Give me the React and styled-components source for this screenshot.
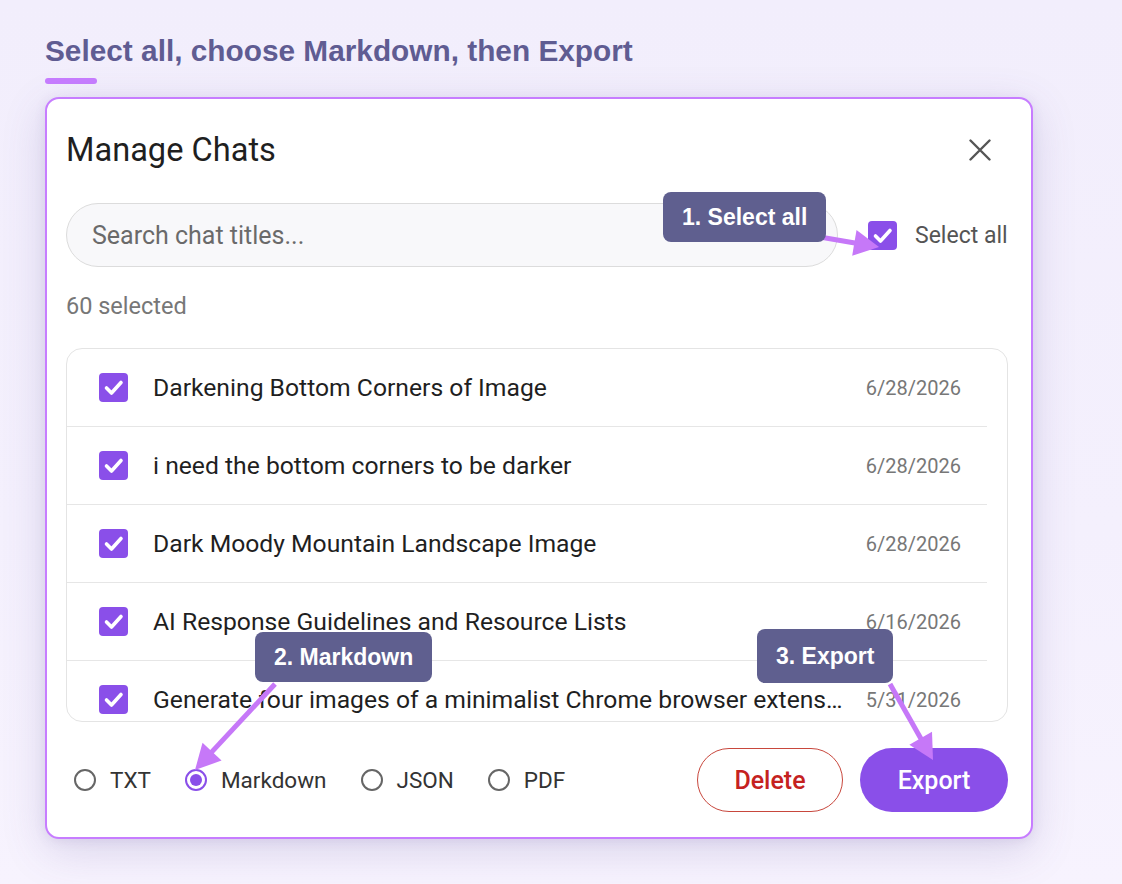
import React from "react";
import styled, { createGlobalStyle } from "styled-components";

const GlobalStyle = createGlobalStyle`
  html, body {
    margin: 0;
    padding: 0;
  }
  body {
    background: linear-gradient(180deg, #f2eefc 0%, #f4f0fd 60%, #f7f3fe 100%);
    font-family: Roboto, "Noto Sans", sans-serif;
    min-height: 100vh;
  }
  * { box-sizing: border-box; }
`;

const Stage = styled.div`
  position: relative;
  width: 1122px;
  height: 884px;
  padding: 33px 0 0 45px;
  overflow: hidden;
`;

const StepTitle = styled.h1`
  margin: 0;
  font-family: "Liberation Sans", Arial, sans-serif;
  font-weight: 700;
  font-size: 29.8px;
  line-height: 36px;
  color: #5f5c92;
`;

const Accent = styled.div`
  margin-top: 9px;
  width: 52px;
  height: 6px;
  border-radius: 3px;
  background: #c77dff;
`;

const Modal = styled.section`
  margin-top: 13px;
  width: 988px;
  background: #ffffff;
  border: 2px solid #c77dff;
  border-radius: 14px;
  padding: 31px 23px 25px 19px;
  box-shadow: 0 12px 44px rgba(90, 70, 150, 0.18), 0 2px 12px rgba(90, 70, 150, 0.1);
`;

const Header = styled.header`
  display: flex;
  align-items: center;
  justify-content: space-between;
  height: 40px;
`;

const Title = styled.h2`
  margin: 0;
  font-size: 32.6px;
  line-height: 40px;
  font-weight: 400;
  color: #1f1f1f;
`;

const CloseButton = styled.button`
  width: 40px;
  height: 40px;
  margin-right: 8px;
  border: none;
  background: transparent;
  padding: 0;
  display: flex;
  align-items: center;
  justify-content: center;
  color: #555;
  cursor: pointer;
`;

const SearchRow = styled.div`
  margin-top: 33px;
  display: flex;
  align-items: center;
`;

const Search = styled.input`
  width: 772px;
  height: 64px;
  border-radius: 32px;
  border: 1px solid #dcdcdc;
  background: #f8f8fa;
  padding: 0 0 0 25px;
  font-family: Roboto, sans-serif;
  font-size: 25px;
  color: #222;
  outline: none;
  &::placeholder {
    color: #6a6a6a;
  }
`;

const CheckLabel = styled.label`
  margin-left: 30px;
  display: flex;
  align-items: center;
  gap: 18px;
  font-size: 23px;
  color: #555;
`;

const Box = styled.span`
  flex: none;
  width: 29px;
  height: 29px;
  border-radius: 4px;
  background: #8a4fe9;
  display: inline-flex;
  align-items: center;
  justify-content: center;
`;

const Count = styled.div`
  margin-top: 25px;
  font-size: 23.5px;
  line-height: 28px;
  color: #777;
`;

const List = styled.div`
  margin-top: 28px;
  height: 374px;
  border: 1px solid #e4e4e4;
  border-radius: 16px;
  overflow: hidden;
`;

const Rows = styled.ul`
  margin: 0 20px 0 0;
  padding: 0;
  list-style: none;
`;

const Row = styled.li`
  height: 78px;
  display: flex;
  align-items: center;
  padding: 0 26px 0 32px;
  border-bottom: 1px solid #e6e6e6;
`;

const ChatTitle = styled.span`
  flex: 1;
  min-width: 0;
  margin-left: 25px;
  font-size: 24.7px;
  color: #1f1f1f;
  white-space: nowrap;
  overflow: hidden;
  text-overflow: ellipsis;
`;

const ChatDate = styled.span`
  flex: none;
  margin-left: 20px;
  font-size: 20px;
  color: #777;
`;

const Footer = styled.div`
  margin-top: 26px;
  height: 64px;
  display: flex;
  align-items: center;
`;

const Formats = styled.div`
  display: flex;
  align-items: center;
  gap: 34px;
  padding-left: 8px;
  flex: 1;
`;

const Option = styled.label`
  display: flex;
  align-items: center;
  gap: 14px;
  font-size: 22.5px;
  color: #333;
`;

const Radio = styled.span`
  flex: none;
  width: 22px;
  height: 22px;
  border-radius: 50%;
  border: 2px solid ${(p) => (p.$on ? "#8a4fe9" : "#666")};
  display: inline-flex;
  align-items: center;
  justify-content: center;
  &::after {
    content: "";
    width: 12px;
    height: 12px;
    border-radius: 50%;
    background: ${(p) => (p.$on ? "#8a4fe9" : "transparent")};
  }
`;

const Pill = styled.button`
  height: 64px;
  border-radius: 32px;
  font-family: Roboto, sans-serif;
  font-size: 25px;
  font-weight: 500;
  cursor: pointer;
  padding: 0;
`;

const DeleteButton = styled(Pill)`
  width: 146px;
  background: #fff;
  border: 1px solid #c8473d;
  color: #c5221f;
`;

const ExportButton = styled(Pill)`
  width: 148px;
  margin-left: 17px;
  background: #8a4fe9;
  border: none;
  color: #fff;
`;

const Badge = styled.div`
  position: absolute;
  left: ${(p) => p.$x}px;
  top: ${(p) => p.$y}px;
  height: ${(p) => p.$h || 50}px;
  padding: 0 19px;
  display: flex;
  align-items: center;
  border-radius: 8px;
  background: #5f5f8f;
  color: #fff;
  font-family: "Liberation Sans", Arial, sans-serif;
  font-weight: 700;
  font-size: 23px;
  white-space: nowrap;
`;

const Arrows = styled.svg`
  position: absolute;
  left: 0;
  top: 0;
  pointer-events: none;
`;

const Check = () => (
  <Box>
    <svg width="29" height="29" viewBox="0 0 29 29">
      <path d="M7.5 15 L12.5 20 L22 9.5" fill="none" stroke="#fff" strokeWidth="3.6" strokeLinecap="round" strokeLinejoin="round" />
    </svg>
  </Box>
);

const chats = [
  ["Darkening Bottom Corners of Image", "6/28/2026"],
  ["i need the bottom corners to be darker", "6/28/2026"],
  ["Dark Moody Mountain Landscape Image", "6/28/2026"],
  ["AI Response Guidelines and Resource Lists", "6/16/2026"],
  ["Generate four images of a minimalist Chrome browser extension icon", "5/31/2026"],
];

const formats = ["TXT", "Markdown", "JSON", "PDF"];

const arrow = (x1, y1, tx, ty, head = 25, half = 13) => {
  const dx = tx - x1;
  const dy = ty - y1;
  const len = Math.hypot(dx, dy);
  const ux = dx / len;
  const uy = dy / len;
  const bx = tx - ux * head;
  const by = ty - uy * head;
  const px = -uy * half;
  const py = ux * half;
  return { line: [x1, y1, bx + ux * 2, by + uy * 2], head: `${tx},${ty} ${bx + px},${by + py} ${bx - px},${by - py}` };
};

const pointers = [arrow(814, 236, 879, 247), arrow(275, 684, 195, 770), arrow(890, 684, 933, 760)];

export default function App() {
  return (
    <>
      <GlobalStyle />
      <Stage>
        <StepTitle>Select all, choose Markdown, then Export</StepTitle>
        <Accent />
        <Modal>
          <Header>
            <Title>Manage Chats</Title>
            <CloseButton aria-label="Close">
              <svg width="22" height="22" viewBox="0 0 22 22">
                <path d="M1.5 1.5 L20.5 20.5 M20.5 1.5 L1.5 20.5" stroke="#555" strokeWidth="2.4" strokeLinecap="round" />
              </svg>
            </CloseButton>
          </Header>
          <SearchRow>
            <Search placeholder="Search chat titles..." />
            <CheckLabel>
              <Check />
              Select all
            </CheckLabel>
          </SearchRow>
          <Count>60 selected</Count>
          <List>
            <Rows>
              {chats.map(([title, date]) => (
                <Row key={title}>
                  <Check />
                  <ChatTitle>{title}</ChatTitle>
                  <ChatDate>{date}</ChatDate>
                </Row>
              ))}
            </Rows>
          </List>
          <Footer>
            <Formats>
              {formats.map((f) => (
                <Option key={f}>
                  <Radio $on={f === "Markdown"} />
                  {f}
                </Option>
              ))}
            </Formats>
            <DeleteButton>Delete</DeleteButton>
            <ExportButton>Export</ExportButton>
          </Footer>
        </Modal>

        <Arrows width="1122" height="884" viewBox="0 0 1122 884">
          {pointers.map((p, i) => (
            <g key={i} fill="#c678f8" stroke="#c678f8">
              <line x1={p.line[0]} y1={p.line[1]} x2={p.line[2]} y2={p.line[3]} strokeWidth="5" />
              <polygon points={p.head} stroke="none" />
            </g>
          ))}
        </Arrows>
        <Badge $x={663} $y={192}>1. Select all</Badge>
        <Badge $x={255} $y={632}>2. Markdown</Badge>
        <Badge $x={757} $y={629} $h={54}>3. Export</Badge>
      </Stage>
    </>
  );
}
